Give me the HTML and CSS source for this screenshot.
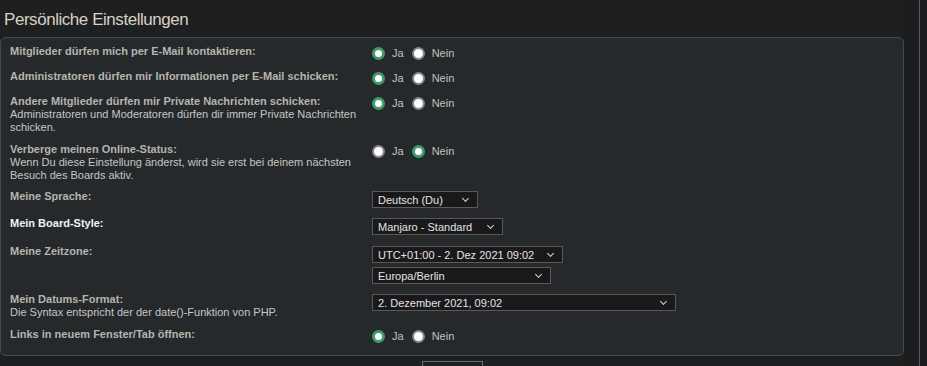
FILE: index.html
```
<!DOCTYPE html>
<html lang="de">
<head>
    <meta charset="UTF-8">
    <meta name="viewport" content="width=device-width, initial-scale=1.0">
    <title>Persönliche Einstellungen</title>
    <link rel="stylesheet" href="styles.css">
</head>
<body>
    <div class="page">
        <div class="content">
            <h2>Persönliche Einstellungen</h2>
            <form>
                <div class="panel">
                    <dl>
                        <dt><label>Mitglieder dürfen mich per E-Mail kontaktieren:</label></dt>
                        <dd class="radios">
                            <label><input type="radio" name="viewemail" checked> Ja</label>
                            <label><input type="radio" name="viewemail"> Nein</label>
                        </dd>
                    </dl>
                    <dl>
                        <dt><label>Administratoren dürfen mir Informationen per E-Mail schicken:</label></dt>
                        <dd class="radios">
                            <label><input type="radio" name="massemail" checked> Ja</label>
                            <label><input type="radio" name="massemail"> Nein</label>
                        </dd>
                    </dl>
                    <dl>
                        <dt>
                            <label>Andere Mitglieder dürfen mir Private Nachrichten schicken:</label>
                            <span>Administratoren und Moderatoren dürfen dir immer Private Nachrichten schicken.</span>
                        </dt>
                        <dd class="radios">
                            <label><input type="radio" name="allowpm" checked> Ja</label>
                            <label><input type="radio" name="allowpm"> Nein</label>
                        </dd>
                    </dl>
                    <dl>
                        <dt>
                            <label>Verberge meinen Online-Status:</label>
                            <span>Wenn Du diese Einstellung änderst, wird sie erst bei deinem nächsten Besuch des Boards aktiv.</span>
                        </dt>
                        <dd class="radios">
                            <label><input type="radio" name="hideonline"> Ja</label>
                            <label><input type="radio" name="hideonline" checked> Nein</label>
                        </dd>
                    </dl>
                    <dl class="tight">
                        <dt><label>Meine Sprache:</label></dt>
                        <dd>
                            <div class="select w-lang">
                                <select><option>Deutsch (Du)</option></select>
                            </div>
                        </dd>
                    </dl>
                    <dl>
                        <dt><label class="strong">Mein Board-Style:</label></dt>
                        <dd>
                            <div class="select w-style">
                                <select><option>Manjaro - Standard</option></select>
                            </div>
                        </dd>
                    </dl>
                    <dl class="loose">
                        <dt><label>Meine Zeitzone:</label></dt>
                        <dd class="stack">
                            <div class="select w-tz">
                                <select><option>UTC+01:00 - 2. Dez 2021 09:02</option></select>
                            </div>
                            <div class="select w-city">
                                <select><option>Europa/Berlin</option></select>
                            </div>
                        </dd>
                    </dl>
                    <dl>
                        <dt>
                            <label>Mein Datums-Format:</label>
                            <span>Die Syntax entspricht der der date()-Funktion von PHP.</span>
                        </dt>
                        <dd>
                            <div class="select w-date">
                                <select><option>2. Dezember 2021, 09:02</option></select>
                            </div>
                        </dd>
                    </dl>
                    <dl>
                        <dt><label>Links in neuem Fenster/Tab öffnen:</label></dt>
                        <dd class="radios">
                            <label><input type="radio" name="newwindow" checked> Ja</label>
                            <label><input type="radio" name="newwindow"> Nein</label>
                        </dd>
                    </dl>
                </div>
                <div class="submit-buttons">
                    <button type="submit" aria-label="Absenden"></button>
                </div>
            </form>
        </div>
        <div class="rail"></div>
    </div>
</body>
</html>
```

FILE: styles.css
```
* {
    margin: 0;
    padding: 0;
    box-sizing: border-box;
}

body {
    font-family: "Liberation Sans", Arial, sans-serif;
    font-size: 11px;
    line-height: 13px;
    background: #1b1c1e;
    color: #c6c6c6;
    overflow: hidden;
    height: 100vh;
}

.page {
    display: flex;
    height: 100vh;
}

.content {
    width: 904px;
    margin-right: 15px;
    background: #1e1f21;
}

.rail {
    width: 1px;
    background: #58595c;
}

h2 {
    font-size: 17px;
    font-weight: normal;
    line-height: 20px;
    letter-spacing: -0.45px;
    color: #d7d1c4;
    padding: 10px 0 0 4px;
    margin-bottom: 7px;
}

.panel {
    background: #25292c;
    border: 1px solid #484b4e;
    border-radius: 6px;
    padding: 7px 9px 2px;
}

dl {
    display: flex;
    margin-bottom: 9px;
}

dl.tight {
    margin-top: -1px;
}

dl.loose {
    padding-top: 1px;
}

dt {
    width: 362px;
    flex-shrink: 0;
    padding-right: 10px;
}

dt label {
    display: block;
    font-weight: bold;
    color: #b7b4ae;
}

dt label.strong {
    color: #f2f2f2;
}

dt span {
    display: block;
    color: #c6c6c6;
}

dd {
    flex: 1;
}

.radios {
    display: flex;
    align-items: center;
    height: 16px;
    color: #c4c1bb;
}

.radios label {
    display: flex;
    align-items: center;
    margin-right: 8px;
}

input[type="radio"] {
    appearance: none;
    width: 13px;
    height: 13px;
    margin: 0 7px 0 0;
    border-radius: 50%;
    border: 2px solid #86848e;
    background: #ffffff;
}

input[type="radio"]:checked {
    border: 3.5px solid #3f9b69;
}

.select {
    position: relative;
    margin-top: 1px;
}

.select::after {
    content: '';
    position: absolute;
    right: 10px;
    top: 5px;
    width: 4px;
    height: 4px;
    border-right: 1.4px solid #d6d6d6;
    border-bottom: 1.4px solid #d6d6d6;
    transform: rotate(45deg);
    pointer-events: none;
}

select {
    appearance: none;
    width: 100%;
    height: 17px;
    padding: 0 18px 0 5px;
    font-family: "Liberation Sans", Arial, sans-serif;
    font-size: 11px;
    color: #e4e4e4;
    background: #19191b;
    border: 1px solid #5e5852;
    border-radius: 0;
    outline: none;
}

.w-lang { width: 106px; }
.w-style { width: 131px; }
.w-tz { width: 191px; }
.w-city { width: 179px; }
.w-date { width: 304px; }

.stack {
    display: flex;
    flex-direction: column;
    gap: 3px;
}

.submit-buttons {
    text-align: center;
    padding-top: 5px;
}

.submit-buttons button {
    width: 61px;
    height: 22px;
    background: #1f2022;
    border: 1px solid #6c6c6c;
}
```
